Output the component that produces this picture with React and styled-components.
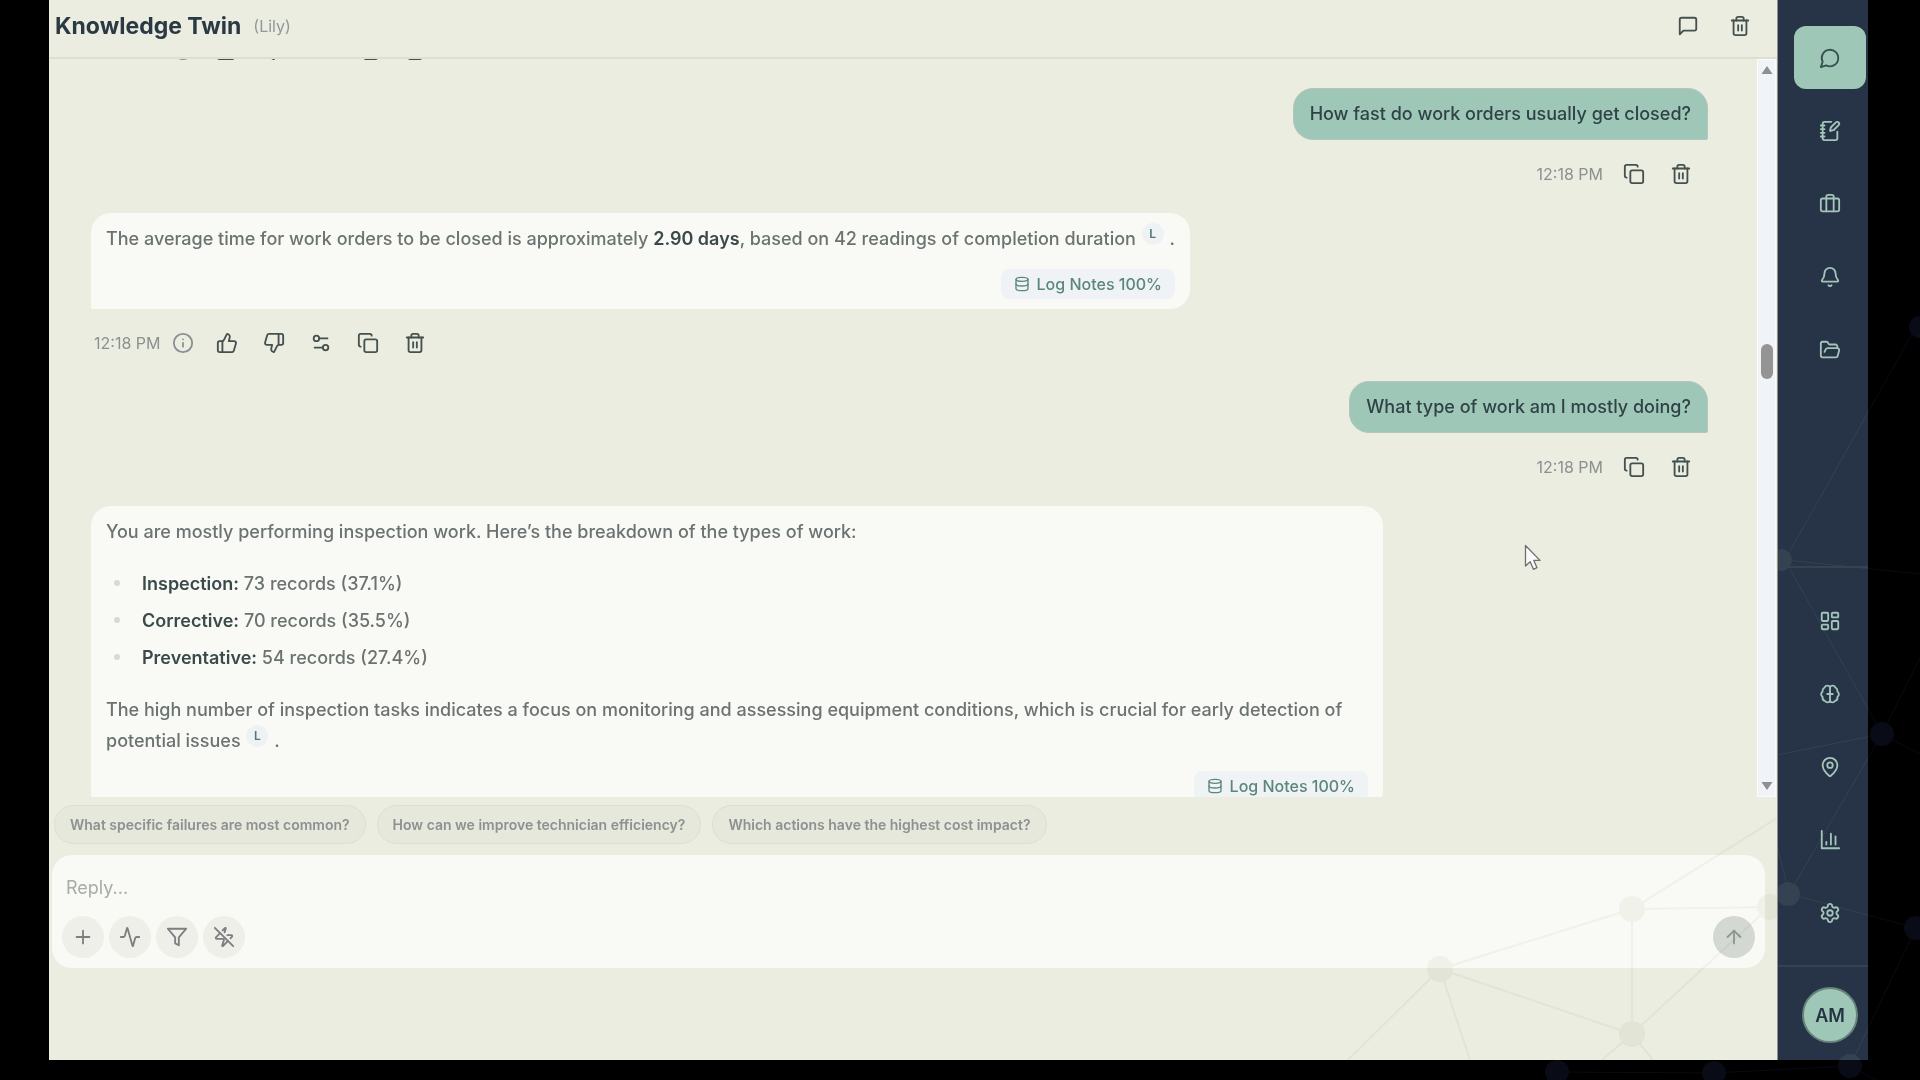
import { useEffect, useRef, useState } from "react";
import styled, { createGlobalStyle } from "styled-components";
import {
  Activity,
  ArrowUp,
  Bell,
  Briefcase,
  Copy,
  Database,
  FolderOpen,
  Info,
  LayoutDashboard,
  MapPin,
  NotebookPen,
  Plus,
  Settings,
  Settings2,
  ThumbsDown,
  ThumbsUp,
  Trash2,
  ZapOff,
} from "lucide-react";

const suggestions = [
  "What specific failures are most common?",
  "How can we improve technician efficiency?",
  "Which actions have the highest cost impact?",
];

const breakdown = [
  { label: "Inspection:", value: "73 records (37.1%)" },
  { label: "Corrective:", value: "70 records (35.5%)" },
  { label: "Preventative:", value: "54 records (27.4%)" },
];

const mainLinks = [
  { label: "Chat", icon: ChatIcon, active: true },
  { label: "Notes", icon: NotebookPen },
  { label: "Work", icon: Briefcase },
  { label: "Alerts", icon: Bell },
  { label: "Files", icon: FolderOpen },
];

const toolLinks = [
  { label: "Dashboard", icon: LayoutDashboard },
  { label: "Knowledge", icon: BrainIcon },
  { label: "Locations", icon: MapPin },
  { label: "Reports", icon: ChartIcon },
  { label: "Settings", icon: Settings },
];

export default function App() {
  const [reply, setReply] = useState("");
  const listRef = useRef(null);

  // the thread opens part way through the history
  useEffect(() => {
    listRef.current.scrollTop = 30;
  }, []);

  return (
    <Page>
      <GlobalStyle />
      <Network viewBox="1440 280 480 800" width="480" height="800" color="#090b17">
        <DarkMesh />
      </Network>
      <Shell>
        <Panel>
          <Network viewBox="1297 780 480 280" width="480" height="280" color="#dfe2d6" $over>
            <LightMesh />
          </Network>
          <Header>
            <Title>Knowledge Twin</Title>
            <Subtitle>(Lily)</Subtitle>
            <HeaderActions>
              <IconButton aria-label="New chat">
                <SquareIcon size={22} />
              </IconButton>
              <IconButton aria-label="Clear chat">
                <Trash2 size={22} />
              </IconButton>
            </HeaderActions>
          </Header>

          <Thread>
            <Messages ref={listRef}>
              <AnswerMeta />
              <Question text="How fast do work orders usually get closed?" />
              <Answer>
                <Paragraph>
                  The average time for work orders to be closed is approximately{" "}
                  <strong>2.90 days</strong>, based on 42 readings of completion duration{" "}
                  <Badge>L</Badge> .
                </Paragraph>
                <SourceTag />
              </Answer>
              <AnswerMeta />
              <Question text="What type of work am I mostly doing?" />
              <Answer>
                <Paragraph>
                  You are mostly performing inspection work. Here’s the breakdown of the types of
                  work:
                </Paragraph>
                <List>
                  {breakdown.map((item) => (
                    <li key={item.label}>
                      <strong>{item.label}</strong> {item.value}
                    </li>
                  ))}
                </List>
                <Paragraph>
                  The high number of inspection tasks indicates a focus on monitoring and assessing
                  equipment conditions, which is crucial for early detection of potential issues{" "}
                  <Badge>L</Badge> .
                </Paragraph>
                <SourceTag />
              </Answer>
            </Messages>
            <ScrollTrack aria-hidden="true">
              <Arrow viewBox="0 0 12 10">
                <path d="M6 1 11.500 9H.5Z" />
              </Arrow>
              <Thumb />
              <Arrow viewBox="0 0 12 10">
                <path d="M6 9 .5 1h11Z" />
              </Arrow>
            </ScrollTrack>
          </Thread>

          <Suggestions>
            {suggestions.map((text) => (
              <Suggestion key={text}>{text}</Suggestion>
            ))}
          </Suggestions>

          <Composer>
            <ReplyInput
              aria-label="Reply"
              placeholder="Reply..."
              rows={1}
              value={reply}
              onChange={(e) => setReply(e.target.value)}
            />
            <Tools>
              <RoundButton aria-label="Add">
                <Plus size={22} />
              </RoundButton>
              <RoundButton aria-label="Activity">
                <Activity size={22} />
              </RoundButton>
              <RoundButton aria-label="Filter">
                <FilterIcon size={22} />
              </RoundButton>
              <RoundButton aria-label="Quick mode off">
                <ZapOff size={22} />
              </RoundButton>
              <SendButton aria-label="Send">
                <ArrowUp size={22} />
              </SendButton>
            </Tools>
          </Composer>
        </Panel>

        <Sidebar>
          <Network viewBox="1778 280 90 780" width="90" height="780" color="#344251">
            <DarkMesh />
          </Network>
          <NavGroup>
            {mainLinks.map((link) => (
              <NavItem key={link.label} {...link} />
            ))}
          </NavGroup>
          <Spacer />
          <NavGroup $divided>
            {toolLinks.map((link) => (
              <NavItem key={link.label} {...link} />
            ))}
          </NavGroup>
          <Account>
            <Avatar aria-label="Account">AM</Avatar>
          </Account>
        </Sidebar>
      </Shell>
      <Pointer viewBox="0 0 18 27" aria-hidden="true">
        <path
          d="M1.500 1.500v20.500l4.700-4.300 3.200 7.600 3.600-1.600-3.200-7.300h6.200Z"
          fill="#fafafa"
          stroke="#6b7070"
          strokeWidth="1.300"
          strokeLinejoin="round"
        />
      </Pointer>
    </Page>
  );
}

function Question({ text }) {
  return (
    <QuestionBlock>
      <QuestionBubble>{text}</QuestionBubble>
      <Meta $right>
        <time>12:18 PM</time>
        <IconButton aria-label="Copy">
          <Copy size={22} />
        </IconButton>
        <IconButton aria-label="Delete">
          <Trash2 size={22} />
        </IconButton>
      </Meta>
    </QuestionBlock>
  );
}

function AnswerMeta() {
  return (
    <Meta>
      <time>12:18 PM</time>
      <IconButton aria-label="Details" $soft>
        <Info size={22} />
      </IconButton>
      <IconButton aria-label="Good answer">
        <ThumbsUp size={22} />
      </IconButton>
      <IconButton aria-label="Bad answer">
        <ThumbsDown size={22} />
      </IconButton>
      <IconButton aria-label="Adjust">
        <Settings2 size={22} />
      </IconButton>
      <IconButton aria-label="Copy">
        <Copy size={22} />
      </IconButton>
      <IconButton aria-label="Delete">
        <Trash2 size={22} />
      </IconButton>
    </Meta>
  );
}

function SourceTag() {
  return (
    <Source>
      <Database size={16} />
      Log Notes 100%
    </Source>
  );
}

function NavItem({ label, icon: Icon, active }) {
  return (
    <NavLink href="#" aria-label={label} $active={active}>
      <Icon size={22} />
    </NavLink>
  );
}

function LineIcon({ size, children }) {
  return (
    <svg
      width={size}
      height={size}
      viewBox="0 0 24 24"
      fill="none"
      stroke="currentColor"
      strokeWidth="2"
      strokeLinecap="round"
      strokeLinejoin="round"
    >
      {children}
    </svg>
  );
}

function ChatIcon({ size }) {
  return (
    <LineIcon size={size}>
      <path d="M7.900 20A9 9 0 1 0 4 16.100L2 22Z" />
    </LineIcon>
  );
}

function SquareIcon({ size }) {
  return (
    <LineIcon size={size}>
      <path d="M21 15a2 2 0 0 1-2 2H7l-4 4V5a2 2 0 0 1 2-2h14a2 2 0 0 1 2 2z" />
    </LineIcon>
  );
}

function FilterIcon({ size }) {
  return (
    <LineIcon size={size}>
      <path d="M22 3H2l8 9.460V19l4 2v-8.540L22 3z" />
    </LineIcon>
  );
}

function BrainIcon({ size }) {
  return (
    <LineIcon size={size}>
      <path d="M12 4v16.500M9 12h6" />
      <path d="M12 4.500C11 2.500 7.500 2 6 5 3.500 6.500 3.800 8.500 3.800 9.500 1.800 11 1.800 13.500 3.800 15c-.2 2 .7 4 2.700 4.500 1.500 2.500 4.700 2 5.500 0" />
      <path d="M12 4.500C13 2.500 16.500 2 18 5c2.500 1.500 2.200 3.500 2.200 4.500 2 1.500 2 4 0 5.500.2 2-.7 4-2.700 4.500-1.500 2.500-4.700 2-5.500 0" />
    </LineIcon>
  );
}

function ChartIcon({ size }) {
  return (
    <LineIcon size={size}>
      <path d="M3 2v19h19M18 17V8M13 17V5M8 17v-3" />
    </LineIcon>
  );
}

function LightMesh() {
  return (
    <>
      <path d="M1440 969 1632 909 1777 818M1632 909l145-2M1632 909v125M1440 969l192 65 145-134M1440 969l-92 91M1440 969l30 91M1632 1034l-30 26M1632 1034l21 26" />
      <circle cx="1440" cy="969" r="13" />
      <circle cx="1632" cy="909" r="13" />
      <circle cx="1632" cy="1034" r="13" />
      <circle cx="1770" cy="907" r="13" />
    </>
  );
}

function DarkMesh() {
  return (
    <>
      <path d="M1785 560 1916 327M1785 560l135 14M1785 560l97 174M1882 734l-105 21M1882 734l-93 160M1882 734l38 20M1882 734l38-76M1789 894l-12-50M1789 894l127 34-66 138M1850 1066l-136 7-157-1M1850 1066l26 14" />
      <circle cx="1781" cy="560" r="11" />
      <circle cx="1920" cy="327" r="11" />
      <circle cx="1882" cy="734" r="12" />
      <circle cx="1788" cy="894" r="12" />
      <circle cx="1916" cy="928" r="12" />
      <circle cx="1850" cy="1066" r="12" />
      <circle cx="1714" cy="1073" r="12" />
      <circle cx="1557" cy="1072" r="12" />
    </>
  );
}

const GlobalStyle = createGlobalStyle`
  * {
    box-sizing: border-box;
  }
  body {
    margin: 0;
    background: #000;
    font-family: Inter, "Liberation Sans", sans-serif;
  }
  button {
    border: 0;
    padding: 0;
    font: inherit;
    background: none;
    cursor: pointer;
  }
`;

const Page = styled.div`
  position: relative;
  height: 100vh;
  padding: 0 52px 20px 49px;
  overflow: hidden;
`;

const Network = styled.svg`
  position: absolute;
  right: 0;
  bottom: 0;
  z-index: ${(p) => (p.$over ? 1 : 0)};
  mix-blend-mode: ${(p) => (p.$over ? "multiply" : "normal")};
  opacity: ${(p) => (p.$over ? 0.3 : 1)};
  pointer-events: none;
  path {
    fill: none;
    stroke: currentColor;
    stroke-width: ${(p) => (p.$over ? 2 : 1)};
  }
  circle {
    fill: currentColor;
  }
`;

const Shell = styled.div`
  position: relative;
  display: grid;
  grid-template-columns: 1fr 90px;
  height: 100%;
`;

const Panel = styled.main`
  position: relative;
  display: flex;
  flex-direction: column;
  min-width: 0;
  min-height: 0;
  border-right: 1px solid #8b9590;
  background: #ebede0;
`;

const Header = styled.header`
  display: flex;
  align-items: center;
  gap: 12px;
  height: 59px;
  padding: 0 26px 6px 6px;
  border-bottom: 2px solid #dddfd3;
  flex-shrink: 0;
`;

const Title = styled.h1`
  margin: 0;
  font-size: 23px;
  font-weight: 700;
  color: #2a3944;
`;

const Subtitle = styled.span`
  font-size: 16px;
  color: #92979a;
`;

const HeaderActions = styled.div`
  display: flex;
  gap: 30px;
  margin-left: auto;
`;

const IconButton = styled.button`
  display: flex;
  color: ${(p) => (p.$soft ? "#8b9192" : "#44514f")};
`;

const Thread = styled.section`
  display: flex;
  flex: 1;
  min-height: 0;
`;

const Messages = styled.div`
  display: flex;
  flex-direction: column;
  flex: 1;
  min-width: 0;
  padding: 0 49px 0 42px;
  overflow-y: scroll;
  scrollbar-width: none;
  > * {
    flex-shrink: 0;
  }
`;

const ScrollTrack = styled.div`
  display: flex;
  flex-direction: column;
  align-items: center;
  width: 19px;
  margin-right: 1px;
  padding: 5px 0;
  border: 1px solid #fbfcfa;
  background: #f0f4f8;
`;

const Arrow = styled.svg`
  width: 12px;
  height: 10px;
  fill: #8d8f90;
  &:last-child {
    margin-top: auto;
  }
`;

const Thumb = styled.div`
  width: 12px;
  height: 35px;
  margin-top: 269px;
  border-radius: 6px;
  background: #949494;
`;

const Meta = styled.div`
  display: flex;
  align-items: center;
  align-self: ${(p) => (p.$right ? "flex-end" : "flex-start")};
  gap: 25px;
  height: 42px;
  padding: ${(p) => (p.$right ? "0 16px 0 0" : "0 3px")};
  color: #8b9192;
  font-size: 16px;
  time {
    margin-right: ${(p) => (p.$right ? "-5px" : "-13px")};
  }
  time + button {
    margin-right: ${(p) => (p.$right ? "0" : "-3px")};
  }
`;

const QuestionBlock = styled.article`
  display: flex;
  flex-direction: column;
  align-items: flex-end;
  gap: 13px;
  margin-top: 17px;
`;

const QuestionBubble = styled.div`
  padding: 0 16px;
  border: 1px solid #b5c5ba;
  border-radius: 20px 20px 2px 20px;
  background: #9fc7b8;
  color: #2f4347;
  font-size: 18px;
  font-weight: 500;
  line-height: 50px;
`;

const Answer = styled.article`
  align-self: flex-start;
  display: flex;
  flex-direction: column;
  max-width: 1292px;
  margin: 18px 0 13px;
  padding: 10px 15px;
  border-radius: 20px 20px 20px 0;
  background: #f9faf5;
  color: #6b7372;
  font-size: 18px;
  font-weight: 500;
  line-height: 31px;
  strong {
    font-weight: 600;
    color: #3a4a4b;
  }
`;

const Paragraph = styled.p`
  margin: 0;
`;

const List = styled.ul`
  display: grid;
  gap: 6px;
  margin: 21px 0;
  padding-left: 36px;
  list-style: none;
  li::before {
    content: "";
    display: inline-block;
    width: 6px;
    height: 6px;
    margin: 0 22px 0 -28px;
    border-radius: 50%;
    background: #d6dad3;
    vertical-align: 4px;
  }
`;

const Badge = styled.sup`
  display: inline-block;
  width: 22px;
  height: 22px;
  margin: -6px 1px 0;
  border-radius: 11px;
  background: #eff2f4;
  color: #4b7a70;
  font-size: 12px;
  font-weight: 600;
  line-height: 22px;
  text-align: center;
  vertical-align: 7px;
`;

const Source = styled.div`
  display: flex;
  align-items: center;
  align-self: flex-end;
  gap: 7px;
  height: 30px;
  margin-top: 15px;
  padding: 0 13px;
  border-radius: 8px;
  background: #f0f3f6;
  color: #5b877b;
  font-size: 16px;
  font-weight: 500;
`;

const Suggestions = styled.div`
  display: flex;
  gap: 11px;
  padding: 8px 5px 11px;
`;

const Suggestion = styled.button`
  height: 39px;
  padding: 0 15px;
  border: 1px solid #dcdfd2;
  border-radius: 20px;
  background: #e6e8db;
  color: #8c9191;
  font-size: 14px;
  font-weight: 600;
`;

const Composer = styled.form`
  margin: 0 12px 92px 3px;
  padding: 18px 10px 10px;
  border-radius: 20px;
  background: #f9faf5;
`;

const ReplyInput = styled.textarea`
  display: block;
  width: 100%;
  height: 30px;
  margin-bottom: 13px;
  padding: 0 4px;
  border: 0;
  outline: 0;
  resize: none;
  background: none;
  color: #3a4a4b;
  font: 18px/30px Inter, sans-serif;
  &::placeholder {
    color: #a6aca8;
  }
`;

const Tools = styled.div`
  display: flex;
  gap: 5px;
`;

const RoundButton = styled.button.attrs({ type: "button" })`
  display: grid;
  place-items: center;
  width: 42px;
  height: 42px;
  border-radius: 50%;
  background: #eeefe8;
  color: #7b7f7e;
`;

const SendButton = styled(RoundButton)`
  margin-left: auto;
  background: #d3d8d2;
  color: #8d9794;
`;

const Sidebar = styled.aside`
  position: relative;
  display: flex;
  flex-direction: column;
  overflow: hidden;
  background: #273346;
`;

const NavGroup = styled.nav`
  position: relative;
  display: flex;
  flex-direction: column;
  gap: 10px;
  padding: ${(p) => (p.$divided ? "21px 2px 21px 16px" : "26px 2px 0 16px")};
  border-top: ${(p) => (p.$divided ? "2px solid #35434f" : "0")};
`;

const NavLink = styled.a`
  display: grid;
  place-items: center;
  height: 63px;
  border-radius: 12px;
  background: ${(p) => (p.$active ? "#9fc7b8" : "transparent")};
  color: ${(p) => (p.$active ? "#35514f" : "#a3c5b9")};
`;

const Spacer = styled.div`
  flex: 1;
`;

const Account = styled.div`
  position: relative;
  display: flex;
  justify-content: center;
  height: 95px;
  padding: 20px 0 0 14px;
  border-top: 2px solid #35434f;
`;

const Avatar = styled.button`
  width: 56px;
  height: 56px;
  border: 2px solid #668479;
  border-radius: 50%;
  background: #9fc7b8;
  color: #22343f;
  font-size: 18px;
  font-weight: 600;
`;

const Pointer = styled.svg`
  position: absolute;
  top: 544px;
  left: 1524px;
  width: 18px;
  height: 27px;
`;
